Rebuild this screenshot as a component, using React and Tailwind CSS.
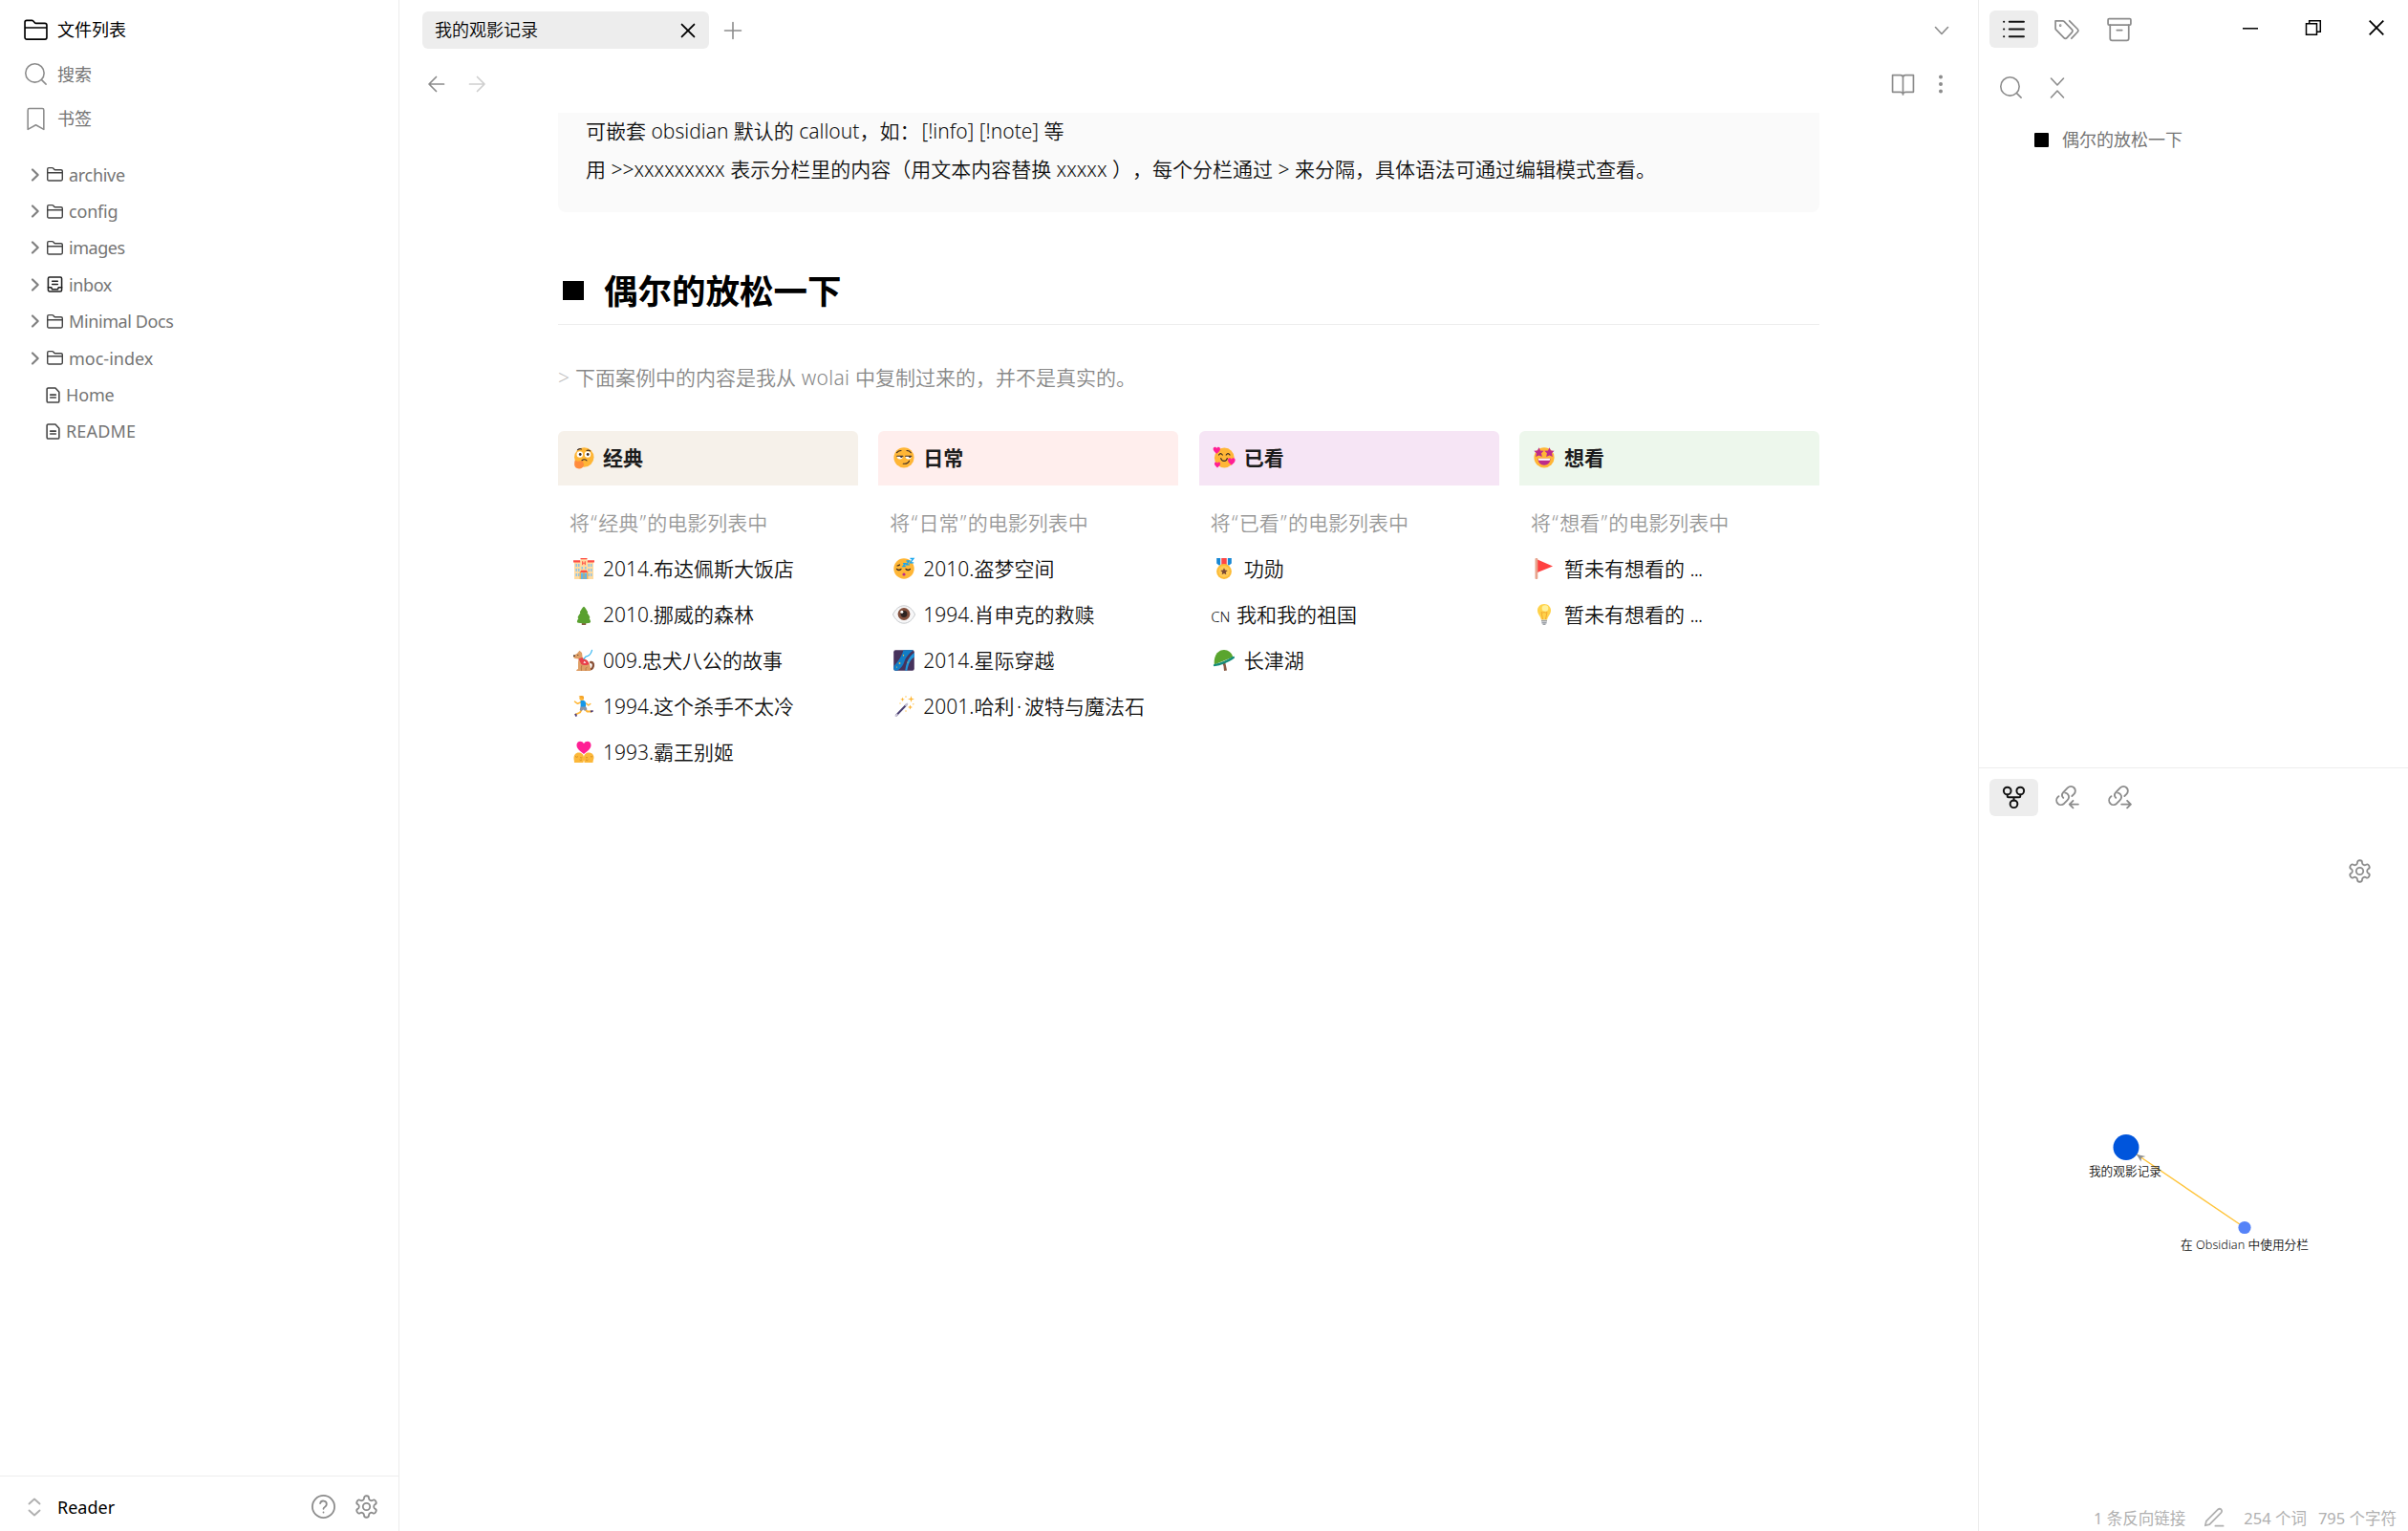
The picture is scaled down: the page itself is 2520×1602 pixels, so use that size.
import React from "react";

/* ---------- line icons ---------- */

function Icon({ size = 24, sw = 1.5, className = "", children }) {
  return (
    <svg
      width={size}
      height={size}
      viewBox="0 0 24 24"
      fill="none"
      stroke="currentColor"
      strokeWidth={sw}
      strokeLinecap="round"
      strokeLinejoin="round"
      className={"block shrink-0 " + className}
    >
      {children}
    </svg>
  );
}

const FolderShape = () => (
  <path d="M1 9.600h22M1 19.200V4.200c0-1.200.7-1.900 1.800-1.900h5.200c.6 0 1 .2 1.400.6l1.500 1.700c.3.400.8.600 1.400.600H21c1.200 0 2 .8 2 2v12c0 1.200-.7 2-1.900 2H2.900C1.700 21.200 1 20.400 1 19.200z" />
);
const SearchShape = () => (
  <>
    <circle cx="11" cy="11" r="9.300" />
    <path d="m17.600 17.600 4.600 4.600" />
  </>
);
const GearShape = () => (
  <>
    <path d="M12.220 2h-.440a2 2 0 0 0-2 2v.180a2 2 0 0 1-1 1.730l-.430.250a2 2 0 0 1-2 0l-.150-.080a2 2 0 0 0-2.730.730l-.220.380a2 2 0 0 0 .730 2.730l.150.100a2 2 0 0 1 1 1.720v.510a2 2 0 0 1-1 1.740l-.150.090a2 2 0 0 0-.730 2.730l.220.380a2 2 0 0 0 2.730.730l.150-.080a2 2 0 0 1 2 0l.430.250a2 2 0 0 1 1 1.730V20a2 2 0 0 0 2 2h.440a2 2 0 0 0 2-2v-.180a2 2 0 0 1 1-1.730l.430-.250a2 2 0 0 1 2 0l.150.080a2 2 0 0 0 2.730-.730l.220-.390a2 2 0 0 0-.730-2.730l-.150-.080a2 2 0 0 1-1-1.740v-.500a2 2 0 0 1 1-1.740l.150-.090a2 2 0 0 0 .730-2.730l-.220-.380a2 2 0 0 0-2.730-.730l-.150.080a2 2 0 0 1-2 0l-.430-.250a2 2 0 0 1-1-1.730V4a2 2 0 0 0-2-2z" />
    <circle cx="12" cy="12" r="3.300" />
  </>
);
const ChainShape = () => (
  <>
    <path d="M8.600 12.800C6.900 11 7 9 8.500 7.400l4.200-4.300c1.900-1.800 4.600-1.700 6.200-.100 1.700 1.700 1.700 4.400 0 6.100l-2 2" />
    <path d="M10.300 7.900c1.800.100 4 2 3.600 4.500-.1 1.100-.7 2-1.500 2.800l-3 3c-1.800 1.700-4.500 1.700-6.100.100-1.700-1.700-1.700-4.400-.100-6.100l1-1" />
  </>
);

/* ---------- colour glyphs (22 x 22) ---------- */

function Glyph({ children }) {
  return (
    <svg width="22" height="22" viewBox="0 0 22 22" className="block shrink-0 overflow-visible">
      {children}
    </svg>
  );
}

const FACE = "#ffb636";
const HEART =
  "M0 3.100C-1.300 2-3.200.600-3.200-1.200-3.200-3.400-.800-3.600 0-1.900.8-3.600 3.200-3.400 3.200-1.200 3.200.600 1.300 2 0 3.100z";

const glyphs = {
  thinking: (
    <Glyph>
      <circle cx="11.300" cy="10.500" r="10.200" fill={FACE} />
      <circle cx="6.800" cy="7.500" r="3.200" fill="#fff" />
      <circle cx="15" cy="7.500" r="3.200" fill="#fff" />
      <circle cx="7.200" cy="7.500" r="1.400" fill="#3c2b24" />
      <circle cx="15.200" cy="7.500" r="1.400" fill="#3c2b24" />
      <path d="M4.500 2.700q2-1.500 4-.8M14 3.400q2-.8 3.600.5M8.800 14q2.700-2.400 5.200-.2" stroke="#3c2b24" strokeWidth="1.100" fill="none" strokeLinecap="round" />
      <path d="M1.300 15c.4-1.400 1.800-1.500 2.500-.3l5.200-.4c1.600-.100 1.900 1.200.7 1.700 1.500.5 1.600 1.800 1.200 3-.7 2.200-2.200 3.400-4.900 3.400-3 0-4.800-1.600-4.900-4.400z" fill="#ff8b3d" />
    </Glyph>
  ),
  smirk: (
    <Glyph>
      <circle cx="11" cy="10.800" r="10.600" fill={FACE} />
      <path d="M3.700 9.300h6.200a3.100 3.300 0 0 1-6.200 0zM12.600 9.300h6.200a3.100 3.300 0 0 1-6.200 0z" fill="#fff" />
      <path d="M3.700 9.300h6.200M12.600 9.300h6.200M3.500 5.700q1.800-2.200 4.500-2.200M14 3.500q2.700 0 4.300 2.200M10.200 17.200q4.800.600 6.300-3" stroke="#3c2b24" strokeWidth="1.100" fill="none" strokeLinecap="round" />
      <path d="M6.800 9.300h3a1.500 1.700 0 0 1-3 0zM15.700 9.300h3a1.500 1.700 0 0 1-3 0z" fill="#3c2b24" />
    </Glyph>
  ),
  love: (
    <Glyph>
      <circle cx="11.300" cy="11" r="10.400" fill={FACE} />
      <path d="M5.500 8q1.800-2.800 3.800 0M13.200 8q1.900-2.800 3.800 0M7.700 11.500c.7 3.800 6 3.800 6.600 0" stroke="#3c2b24" strokeWidth="1.200" fill="none" strokeLinecap="round" />
      <g fill="#ff1f94">
        <path d={HEART} transform="translate(3.300 3.200) scale(1.150)" />
        <path d={HEART} transform="translate(18.800 15) scale(1.200)" />
        <path d={HEART} transform="translate(4 18.500) scale(.95)" />
      </g>
    </Glyph>
  ),
  star: (
    <Glyph>
      <circle cx="11" cy="10.800" r="10.600" fill={FACE} />
      <g fill="#bd2b8b">
        <path d="M5.500.300l1.500 3.200 3.600.300-2.600 2.500.8 3.700-3.300-1.600-3.300 1.600.7-3.700L.300 3.800l3.700-.3z" />
        <path d="M16.500.300l1.500 3.200 3.600.300-2.600 2.500.8 3.700-3.300-1.600-3.300 1.600.7-3.700-2.600-2.500 3.700-.3z" />
        <path d="M4.500 11.700h13c0 4-2.500 7-6.500 7s-6.500-3-6.500-7z" />
      </g>
      <path d="M4.700 11.700h12.600l-.6 2H5.300z" fill="#fff" />
    </Glyph>
  ),
  hotel: (
    <Glyph>
      <path d="M1 4h6l1-3.500h6l1 3.500h6v18H1z" fill="#ffdba0" />
      <path d="M0 2.300h7.200v2.200H0zM14.800 2.300H22v2.200h-7.200zM7.500 0h7v1.300h-7z" fill="#ff4d43" />
      <path d="M9.700 3.200v4M12.300 3.200v4M9.700 5.200h2.600" stroke="#ff4d43" strokeWidth="1" />
      <path d="M2.500 6H4v3H2.500zM5 6h1.500v3H5zM15.500 6H17v3h-1.500zM18 6h1.500v3H18zM2.500 11H4v3H2.500zM5 11h1.500v3H5zM15.500 11H17v3h-1.500zM18 11h1.500v3H18zM2.500 16H4v3H2.500zM5 16h1.500v3H5zM15.500 16H17v3h-1.500zM18 16h1.500v3H18zM8.500 9H10v2.500H8.500zM12 9h1.500v2.500H12z" fill="#8fc3e8" />
      <path d="M6.700 15L8.200 12.700h5.600l1.500 2.300z" fill="#ff4d43" />
      <path d="M8 15.500h6V22H8z" fill="#62b5e8" />
      <path d="M7.200 14.500V22M11 15v7M14.800 14.500V22" stroke="#e8a33d" strokeWidth="1" />
    </Glyph>
  ),
  tree: (
    <Glyph>
      <path d="M8.800 18.500h4.400V22H8.800z" fill="#8a5a44" />
      <path d="M11 2.800c.7 0 3.200 3.700 4 5.500.3.700-.1 1.100-.4 1.300 1.200 1.300 2.300 3 2.700 4.200.2.600-.2 1.100-.7 1.300.8 1.200 1.400 2.500 1.500 3.500.1 1.200-2.600 1.900-7.100 1.900s-7.200-.7-7.100-1.900c.1-1 .7-2.300 1.500-3.500-.5-.2-.9-.7-.7-1.300.4-1.200 1.500-2.900 2.700-4.200-.3-.2-.7-.6-.4-1.300.8-1.800 3.300-5.500 4-5.500z" fill="#59a02f" />
    </Glyph>
  ),
  dog: (
    <Glyph>
      <path d="M18.200 13c3-.6 3.400 3.500 1.900 5.800-.6 1-1.700 1.700-3 1.500" stroke="#8a5238" strokeWidth="2.400" fill="none" strokeLinecap="round" />
      <path d="M0 6l4-2.200L6.500.700 9 3l.7 5.300c3.300 1.500 6.600 4 7.800 8 .5 2.200.6 4 .3 5.700H3l.8-1.500 1.200-.5V13L5.500 9.600 1.500 9C.5 8.500-.300 7 0 6z" fill="#df9f66" />
      <path d="M5.500 9.300l3.700-1.200 1.800 1.500c3 .5 5 2.600 5.500 5.300-3 1.400-6 1.700-8.200.2z" fill="#e8414b" />
      <path d="M10.300 13.500l1.500-1.700 1.500 2.200z" fill="#fff" />
      <path d="M11 9.500c1-2 2-3 4-3.200 2.500-.4 3.300-2 4.500-6" stroke="#35b6f2" strokeWidth="1.200" fill="none" strokeLinecap="round" />
      <path d="M8.500 21.800q-.5-3 .3-5.500M13 21.800q-.5-3 1.500-4" stroke="#b97a48" strokeWidth="1" fill="none" />
      <circle cx=".9" cy="6.200" r=".9" fill="#3c2b24" />
      <circle cx="4.800" cy="5.500" r=".6" fill="#3c2b24" />
    </Glyph>
  ),
  runner: (
    <Glyph>
      <path d="M9 14l-2 3.500-4.500 2M13 15l1.500 1.500h4.500" stroke="#ffb636" strokeWidth="1.800" fill="none" strokeLinecap="round" strokeLinejoin="round" />
      <path d="M8.500 6.500l-4 1.800-3-2.200M13.500 8l2.300 2 2-1.500" stroke="#ffb636" strokeWidth="1.500" fill="none" strokeLinecap="round" strokeLinejoin="round" />
      <path d="M7.500 5.300c2-1 4.500-.3 5.200 1.200.6 1.800.6 4 0 6l-5-.3z" fill="#1697e8" />
      <path d="M7.500 11.500H13c1 .8 1.500 2 1.200 3.300l-2.300.9-1.700-1.200L8.500 16l-1.800-1z" fill="#8b93a5" />
      <path d="M1.200 19.300l1.900-.7.900 2.600-1.600.8zM17.800 15.500l3-.3-.1 1.500-2.500.8z" fill="#4b3a78" />
      <circle cx="8.700" cy="2.700" r="2.400" fill="#ffb636" />
      <path d="M5.500 1C7-.600 10 0 11 1l-.5 2.200-1.800-1.300z" fill="#f3a32c" />
    </Glyph>
  ),
  kiss: (
    <Glyph>
      <path d="M.5 17.500c0-3.500 2-6 5-6s5.500 2 5.500 5c0-3 2.200-5 5.200-5 3.200 0 5.300 2.200 5.300 5.300 0 1.600-1 2.600-1 5.200h-9c0-2-.3-2-.5-2.500-.3 1-.5 1.300-.5 2.500h-9.500c0-2-.5-3-.5-4.500z" fill="#fcb83a" />
      <path d={HEART} transform="translate(11 6.300) scale(2.350 2.150)" fill="#ff1f94" />
      <path d="M2 15.500q1.500 1.500 3 .1M7 16.500q1 1 2.300.2M18 15.500q1 1 2.200 0M13 16.500q1 .8 2 0M6.500 19q1.200 1 2.500 0M13 19q1.200 1 2.500 0" stroke="#c98220" strokeWidth=".7" fill="none" />
    </Glyph>
  ),
  sleep: (
    <Glyph>
      <circle cx="11" cy="11" r="10.700" fill={FACE} />
      <path d="M3.500 11.500q2.200 2 4.500 0M13 11.500q2.200 2 4.500 0M4 8q1.500-.2 2.500-1" stroke="#3c2b24" strokeWidth="1.200" fill="none" strokeLinecap="round" />
      <circle cx="11" cy="17" r="1.600" fill="#bd2b8b" />
      <path d="M10 5.700h2.500l-2.500 3h2.700M13.500 3h3l-3 3.800h3.300M17.500.5H21l-3.500 4.300h3.700" stroke="#18a6ee" strokeWidth="1.300" fill="none" />
    </Glyph>
  ),
  eye: (
    <Glyph>
      <path d="M-.600 11C2 5.500 6 1.800 11 1.800S20 5.500 22.600 11C20 16.500 16 20.200 11 20.200S2 16.500-.600 11z" fill="#f7f7f8" stroke="#b9bcc0" strokeWidth=".8" />
      <circle cx="11" cy="10.500" r="6.400" fill="#82503d" />
      <circle cx="11" cy="10.500" r="3.400" fill="#2d2321" />
      <circle cx="8.800" cy="8.300" r="1.500" fill="#fff" />
    </Glyph>
  ),
  galaxy: (
    <Glyph>
      <rect x=".2" y=".2" width="21.600" height="21.600" rx="2" fill="#46325c" />
      <path d="M10.500.200H21C16 4 13 7.500 11.500 12c-1.200 4-3.500 7.500-7.500 9.800H2.200a2 2 0 0 1-2-2V17.500C3 13.500 7.500 10 10.500.200z" fill="#127dc6" />
      <path d="M21.800 3v4.500c-4 2.500-6 6.500-7.500 14.300h-2C13 15 15.500 7 21.800 3z" fill="#2196dc" />
      <g fill="#ffc83d">
        <circle cx="6.500" cy="14" r=".9" />
        <circle cx="10.500" cy="5.800" r=".7" />
        <circle cx="3.500" cy="18" r=".6" />
        <circle cx="15" cy="13" r=".6" />
      </g>
    </Glyph>
  ),
  wand: (
    <Glyph>
      <path d="M3 20.500L13.500 9.500" stroke="#4a4072" strokeWidth="2" strokeLinecap="round" />
      <path d="M2.500 21l1.200-1.200M13 10l1.300-1.400" stroke="#c9c4d6" strokeWidth="2" strokeLinecap="round" />
      <path d="M18.500 0l.8 2.700 2.700.8-2.700.8-.8 2.700-.8-2.700-2.700-.8 2.700-.8zM9.500 1.500l.6 1.700 1.700.6-1.700.6-.6 1.700-.6-1.700-1.700-.6 1.700-.6zM17.500 9.500l.7 1.800 1.800.7-1.800.7-.7 1.800-.7-1.800-1.800-.7 1.800-.7z" fill="#ffb636" />
      <g fill="#ffc95c">
        <circle cx="13" cy="1" r=".8" />
        <circle cx="20.800" cy="8.700" r=".8" />
        <circle cx="13" cy="16" r=".8" />
        <circle cx="7" cy="8" r=".7" />
      </g>
    </Glyph>
  ),
  medal: (
    <Glyph>
      <path d="M3.200 0h15.600v5.500l-2.500 2H5.700l-2.500-2z" fill="#1787d4" />
      <path d="M7 0h8v7.500H7z" fill="#dfe6ee" />
      <path d="M8.300 0h5.400v7H8.300z" fill="#ff4646" />
      <circle cx="11" cy="14" r="7.900" fill="#fcbb35" />
      <circle cx="11" cy="14" r="5.900" fill="#ffca55" />
      <path d="M11 10.200l1.100 2.400 2.600.3-1.900 1.800.5 2.600-2.300-1.300-2.300 1.300.5-2.600-1.900-1.800 2.600-.3z" fill="#7a4a35" />
    </Glyph>
  ),
  helmet: (
    <Glyph>
      <path d="M8.800 13l3.200-1 2 9.500-3 .5-.5-5z" fill="#8a5a44" />
      <path d="M.8 15.500C-.200 5.500 5 0 11 0c4.500 0 7.700 2.800 9.300 7.500z" fill="#5aa52e" />
      <path d="M.300 15.200C8 13.700 13.500 11 20.200 7l1.500-.3.300 1.800C15.500 13 8 16.500.5 17.200c-.7 0-.9-1.700-.2-2z" fill="#138b78" />
    </Glyph>
  ),
  flag: (
    <Glyph>
      <path d="M4 1.500l16 6.900L4 15z" fill="#ff4141" />
      <rect x="1.500" y="0" width="2.800" height="22" rx="1" fill="#e7a48d" />
    </Glyph>
  ),
  bulb: (
    <Glyph>
      <path d="M11 0c4 0 7 2.900 7 6.700 0 4.300-3.500 6-3.800 9.800H7.800C7.500 12.700 4 11 4 6.700 4 2.900 7 0 11 0z" fill="#ffd24a" />
      <circle cx="12" cy="4.500" r="3.300" fill="#fff19b" />
      <path d="M9.500 16L8 8.500q1.500 1.300 3 0 1.500 1.300 3 0L12.500 16" stroke="#f2a52e" strokeWidth=".9" fill="none" />
      <path d="M8 16.800h6v1.700H8zM8.400 19h5.200v1.400H8.400zM9.500 20.800h3V22h-3z" fill="#9da1a8" />
    </Glyph>
  ),
};

/* ---------- left sidebar ---------- */

const tree = [
  ["archive", "folder", "-tracking-[0.3px]"],
  ["config", "folder", "tracking-[-0.2px]"],
  ["images", "folder", "tracking-[-0.45px]"],
  ["inbox", "folder-inbox", "tracking-[-0.4px]"],
  ["Minimal Docs", "folder", "tracking-[-0.4px]"],
  ["moc-index", "folder", "tracking-[0px]"],
  ["Home", "file", "tracking-[-0.15px]"],
  ["README", "file", "tracking-[0.15px]"],
];

function TreeRow({ name, kind, tracking }) {
  return (
    <div className="flex h-[38.4px] items-center pl-8">
      {kind === "file" ? (
        <div className="w-[15px]" />
      ) : (
        <svg width="11" height="16" viewBox="0 0 11 16" className="mr-1 block" fill="none" stroke="#808080" strokeWidth="2.200" strokeLinecap="round" strokeLinejoin="round">
          <path d="M2 2.500l5.700 5.500L2 13.500" />
        </svg>
      )}
      <div className="ml-0.5 text-[#444]">
        {kind === "folder" && (
          <Icon size={17} sw={2} className="mr-1.5">
            <FolderShape />
          </Icon>
        )}
        {kind === "folder-inbox" && (
          <Icon size={17} sw={2.200} className="mr-1.5 text-[#222]">
            <rect x="2" y="1.500" width="20" height="21" rx="2" />
            <path d="M2 16.500h4.500l1.500 3h8l1.500-3H22M8 7.500h8M8 12h8" />
          </Icon>
        )}
        {kind === "file" && (
          <Icon size={17} sw={2.200} className="-ml-0.5 mr-[5px]">
            <path d="M15.500 1.300H5c-1.300 0-2 .8-2 2v17.400c0 1.300.7 2 2 2h14c1.300 0 2-.7 2-2V7.300zM8 11.500h8M8 15.500h8" />
          </Icon>
        )}
      </div>
      <span className={"text-lg leading-6 text-[#757575] " + tracking}>{name}</span>
    </div>
  );
}

function LeftSidebar() {
  return (
    <aside className="flex w-[418px] shrink-0 flex-col border-r border-[#ededed]">
      <nav className="flex flex-col pt-2 text-lg">
        <div className="flex h-[46.500px] items-center gap-[10px] pl-[25px] text-black">
          <Icon size={25} sw={1.600}>
            <FolderShape />
          </Icon>
          <span>文件列表</span>
        </div>
        <div className="flex h-[46.500px] items-center gap-[10px] pl-[25px] text-[#757575]">
          <Icon size={25} sw={1.500} className="text-[#8c8c8c]">
            <SearchShape />
          </Icon>
          <span>搜索</span>
        </div>
        <div className="flex h-[46.500px] items-center gap-[10px] pl-[25px] text-[#757575]">
          <Icon size={25} sw={1.500} className="text-[#8c8c8c]">
            <path d="M4 22.500V3c0-1 .6-1.500 1.500-1.500h13c.9 0 1.500.5 1.500 1.500v19.500l-8-4.500z" />
          </Icon>
          <span>书签</span>
        </div>
      </nav>
      <div className="mt-4 flex grow flex-col">
        {tree.map(([name, kind, tracking]) => (
          <TreeRow key={name} name={name} kind={kind} tracking={tracking} />
        ))}
      </div>
      <footer className="flex h-[58px] items-center border-t border-[#ededed] pt-[6px] pl-6 pr-5">
        <Icon size={24} sw={1.900} className="text-[#b0b0b0]">
          <path d="m6.500 8.500 5.500-5 5.500 5M6.500 15.500l5.500 5 5.500-5" />
        </Icon>
        <span className="ml-3 grow text-lg leading-6 text-black">Reader</span>
        <Icon size={27} sw={1.600} className="mr-[18px] text-[#8c8c8c]">
          <circle cx="12" cy="12" r="10.300" />
          <path d="M9 9a3 3 0 0 1 5.900 1c0 2-2.900 2.500-2.900 4M12 17.300v.1" />
        </Icon>
        <Icon size={27} sw={1.600} className="text-[#8c8c8c]">
          <GearShape />
        </Icon>
      </footer>
    </aside>
  );
}

/* ---------- note ---------- */

const MiddleDot = () => <span className="inline-block w-[10.500px] text-center">·</span>;

const columns = [
  {
    title: "经典",
    icon: "thinking",
    head: "bg-[#f6f1ea]",
    items: [
      ["hotel", "2014.布达佩斯大饭店"],
      ["tree", "2010.挪威的森林"],
      ["dog", "009.忠犬八公的故事"],
      ["runner", "1994.这个杀手不太冷"],
      ["kiss", "1993.霸王别姬"],
    ],
  },
  {
    title: "日常",
    icon: "smirk",
    head: "bg-[#ffeeed]",
    items: [
      ["sleep", "2010.盗梦空间"],
      ["eye", "1994.肖申克的救赎"],
      ["galaxy", "2014.星际穿越"],
      ["wand", <>2001.哈利<MiddleDot />波特与魔法石</>],
    ],
  },
  {
    title: "已看",
    icon: "love",
    head: "bg-[#f6e5f5]",
    items: [
      ["medal", "功勋"],
      ["cn", "我和我的祖国"],
      ["helmet", "长津湖"],
    ],
  },
  {
    title: "想看",
    icon: "star",
    head: "bg-[#edf7ec]",
    items: [
      ["flag", <>暂未有想看的 <span className="tracking-[-0.8px]">...</span></>],
      ["bulb", <>暂未有想看的 <span className="tracking-[-0.8px]">...</span></>],
    ],
  },
];

function MovieColumn({ title, icon, head, items }) {
  return (
    <section className="flex flex-col">
      <h2 className={"flex h-[57px] items-center gap-[9.500px] rounded-t-md pb-px pl-[15.500px] text-[21px] font-bold text-[#1c1c1c] " + head}>
        {glyphs[icon]}
        <span>{title}</span>
      </h2>
      <p className="mt-[15px] flex h-12 items-center pl-3 font-[350] text-[#999]">
        将<span className="mx-[1.300px]">“</span>
        {title}
        <span className="mx-[1.300px]">”</span>的电影列表中
      </p>
      {items.map(([g, label], i) => (
        <div key={i} className="flex h-12 items-center pl-[15.500px] font-[350] text-[#111]">
          {g === "cn" ? (
            <span className="-ml-[3px] mr-[6.500px] mt-1 text-[15px]">CN</span>
          ) : (
            <span className="mr-[9.500px]">{glyphs[g]}</span>
          )}
          <span className="whitespace-nowrap">{label}</span>
        </div>
      ))}
    </section>
  );
}

function Note() {
  return (
    <main className="flex min-w-0 grow flex-col">
      <div className="flex h-[63px] items-center pl-6 pr-[26px]">
        <div className="flex h-[39px] w-[300px] items-center justify-between rounded-md bg-[#ededed] pl-[13px] pr-[11px]">
          <span className="pb-px text-lg leading-6 font-[350] text-black">我的观影记录</span>
          <Icon size={22} sw={2} className="text-black">
            <path d="M5 5l14 14M19 5L5 19" />
          </Icon>
        </div>
        <Icon size={24} sw={1.600} className="ml-[13px] text-[#8c8c8c]">
          <path d="M3.500 12h17M12 3.500v17" />
        </Icon>
        <div className="grow" />
        <Icon size={24} sw={1.600} className="text-[#8c8c8c]">
          <path d="m5.500 8.500 6.500 7 6.500-7" />
        </Icon>
      </div>
      <div className="flex h-[55px] shrink-0 items-start px-[27px] pt-[13px]">
        <Icon size={24} sw={1.700} className="text-[#8c8c8c]">
          <path d="M19.500 12h-15M11.500 4.500 4 12l7.500 7.500" />
        </Icon>
        <Icon size={24} sw={1.700} className="ml-[17.500px] text-[#cfcfcf]">
          <path d="M4.500 12h15M12.500 4.500 20 12l-7.500 7.500" />
        </Icon>
        <div className="grow" />
        <Icon size={25} sw={1.600} className="mr-[15px] text-[#8c8c8c]">
          <path d="M12 5v17M12 5c0-1.200-.9-2.500-2.500-2.500H1.500v17H9c1.800 0 3 .6 3 2 0-1.400 1.200-2 3-2h7.500v-17h-8C12.900 2.500 12 3.800 12 5z" />
        </Icon>
        <Icon size={24} className="text-[#8c8c8c]">
          <g fill="currentColor" stroke="none">
            <circle cx="12" cy="4.500" r="2" />
            <circle cx="12" cy="12" r="2" />
            <circle cx="12" cy="19.500" r="2" />
          </g>
        </Icon>
      </div>
      <article className="ml-[166px] flex w-[1320px] flex-col text-[21px] leading-[40px] text-[#222] [text-spacing-trim:space-all]">
        <div className="h-[104px] rounded-b-lg bg-[#fafafa] pl-[29px] font-[350] text-[#111]">
          <p className="-mt-[1px]">可嵌套 obsidian 默认的 callout，如：<span className="ml-[2px]">[!info] [!note]</span> 等</p>
          <p>用 &gt;&gt;xxxxxxxxx 表示分栏里的内容（用文本内容替换 xxxxx ），每个分栏通过 &gt; 来分隔，具体语法可通过编辑模式查看。</p>
        </div>
        <h1 className="mt-[47px] flex h-[71px] items-center gap-[21px] border-b border-[#ededed] pl-[5px] text-[35.500px] font-bold text-black">
          <span className="h-[20px] w-[22px] bg-black" />
          <span className="mt-[-1px]">偶尔的放松一下</span>
        </h1>
        <p className="mt-[35px] flex h-10 gap-1.5 font-[350] text-[#888]">
          <span className="text-[#c4c4c4]">&gt;</span>
          <span>下面案例中的内容是我从<span className="tracking-[0.3px]"> wolai </span>中复制过来的，并不是真实的。</span>
        </p>
        <div className="mt-9 grid grid-cols-4 gap-[21.330px]">
          {columns.map((c) => (
            <MovieColumn key={c.title} {...c} />
          ))}
        </div>
      </article>
    </main>
  );
}

/* ---------- right sidebar ---------- */

function PaneTab({ active, children }) {
  return (
    <div
      className={
        "flex h-[39px] w-[51px] items-center justify-center rounded-md " +
        (active ? "bg-[#ededed] text-[#111]" : "text-[#8c8c8c]")
      }
    >
      {children}
    </div>
  );
}

function RightSidebar() {
  return (
    <aside className="flex w-[450px] shrink-0 flex-col border-l border-[#ededed]">
      <section className="flex h-[803px] shrink-0 flex-col">
        <div className="flex h-[61px] items-center pl-[11px]">
          <div className="flex gap-1">
            <PaneTab active>
              <Icon size={25} sw={2}>
                <path d="M7.500 4.500h14.500M7.500 12h14.500M7.500 19.500h14.500M2 4.500h.1M2 12h.1M2 19.500h.1" />
              </Icon>
            </PaneTab>
            <PaneTab>
              <Icon size={26} sw={1.600}>
                <path d="M1 3.500v7.300c0 .6.200 1 .6 1.400l7.600 7.800c.9.900 2 .9 2.800 0l4.900-5.400c.8-.9.8-1.800 0-2.700L9.300 4.100c-.4-.4-.9-.6-1.400-.6zM14.500 3.500l7.700 7.800c1 1 1 2 .1 3L16.500 20.500" />
                <circle cx="5.700" cy="8" r=".4" />
              </Icon>
            </PaneTab>
            <PaneTab>
              <Icon size={26} sw={1.600}>
                <rect x="1" y="1.500" width="22" height="6" rx="1" />
                <path d="M3 7.500v13c0 1.200.8 2 2 2h14c1.200 0 2-.8 2-2v-13M9.500 12.500h5" />
              </Icon>
            </PaneTab>
          </div>
          <div className="ml-[103px] flex items-center gap-[48px] pb-[3px] text-black">
            <svg width="18" height="18" viewBox="0 0 18 18" fill="none" stroke="currentColor" strokeWidth="1.500">
              <path d="M1 9.800h16" />
            </svg>
            <svg width="18" height="18" viewBox="0 0 18 18" fill="none" stroke="currentColor" strokeWidth="1.500">
              <path d="M1.500 4.700h11v11.500h-11zM4.700 4.500V1.700h11.600v11.600h-3.500" />
            </svg>
            <svg width="18" height="18" viewBox="0 0 18 18" fill="none" stroke="currentColor" strokeWidth="1.800">
              <path d="M1.700 1.700l14.600 14.600M16.300 1.700L1.700 16.300" />
            </svg>
          </div>
        </div>
        <div className="flex h-[61px] items-center gap-[23.500px] pl-[21px] text-[#8c8c8c]">
          <Icon size={25} sw={1.500}>
            <SearchShape />
          </Icon>
          <Icon size={24} sw={1.600}>
            <path d="m5.500 2 6.500 7 6.500-7M5.500 22l6.500-7 6.500 7" />
          </Icon>
        </div>
        <div className="flex h-12 items-center gap-3.5 pl-[58px] text-lg text-[#757575]">
          <span className="h-[15px] w-[15px] rounded-[1px] bg-black" />
          <span>偶尔的放松一下</span>
        </div>
      </section>
      <section className="flex grow flex-col border-t border-[#ededed]">
        <div className="flex gap-1 pt-[11px] pl-[11px]">
          <PaneTab active>
            <Icon size={25} sw={1.900} className="-mt-px">
              <circle cx="5.500" cy="5.300" r="3.700" />
              <circle cx="18.500" cy="5.300" r="3.700" />
              <circle cx="12" cy="18.500" r="3.700" />
              <path d="M5.500 9v1.800c0 .8.300 1 1 1h11c.7 0 1-.2 1-1V9M12 11.800v3" />
            </Icon>
          </PaneTab>
          <PaneTab>
            <Icon size={26} sw={1.700} className="-mt-px">
              <ChainShape />
              <path d="M23 19h-8.500M18 15.500 14.500 19l3.500 3.500" />
            </Icon>
          </PaneTab>
          <PaneTab>
            <Icon size={26} sw={1.700} className="-mt-px">
              <ChainShape />
              <path d="M14 19h8.500M19.500 15.500 23 19l-3.500 3.500" />
            </Icon>
          </PaneTab>
        </div>
        <div className="mt-11 flex justify-end pr-[37px]">
          <Icon size={27} sw={1.600} className="text-[#8c8c8c]">
            <GearShape />
          </Icon>
        </div>
        <svg width="449" height="300" viewBox="2071 1100 449 300" className="mt-[175px] block">
          <path d="M2225 1200.500L2349 1284.500" stroke="#ffc53d" strokeWidth="1.400" />
          <path d="M2236 1208l9.500 2-4.500 1.300-.5 4.200z" fill="#8f8f8f" />
          <circle cx="2225" cy="1200.500" r="13.500" fill="#0055dc" />
          <circle cx="2349" cy="1284.500" r="6.600" fill="#5583f8" />
          <g fontSize="12.700" fontWeight="350" fill="#111" textAnchor="middle">
            <text x="2224" y="1230">我的观影记录</text>
            <text x="2349" y="1307">在 Obsidian 中使用分栏</text>
          </g>
        </svg>
        <div className="grow" />
        <footer className="flex h-[27px] items-center justify-end pr-3 text-[16.500px] leading-6 text-[#b0b0b0]">
          <span>1 条反向链接</span>
          <Icon size={22} sw={1.900} className="mb-0.5 ml-[19px] mr-5">
            <path d="M2 21l1.200-5L16.500 2.700c1.200-1 2.600-1 3.600 0 1 1.100 1 2.500 0 3.600L6.900 19.700zM13.500 21.500h9" />
          </Icon>
          <span>254 个词</span>
          <span className="ml-[12px]">795 个字符</span>
        </footer>
      </section>
    </aside>
  );
}

export default function App() {
  return (
    <div className="flex h-[1602px] w-[2520px] overflow-hidden bg-white font-['Noto_Sans','Noto_Sans_CJK_SC',sans-serif]">
      <LeftSidebar />
      <Note />
      <RightSidebar />
    </div>
  );
}
